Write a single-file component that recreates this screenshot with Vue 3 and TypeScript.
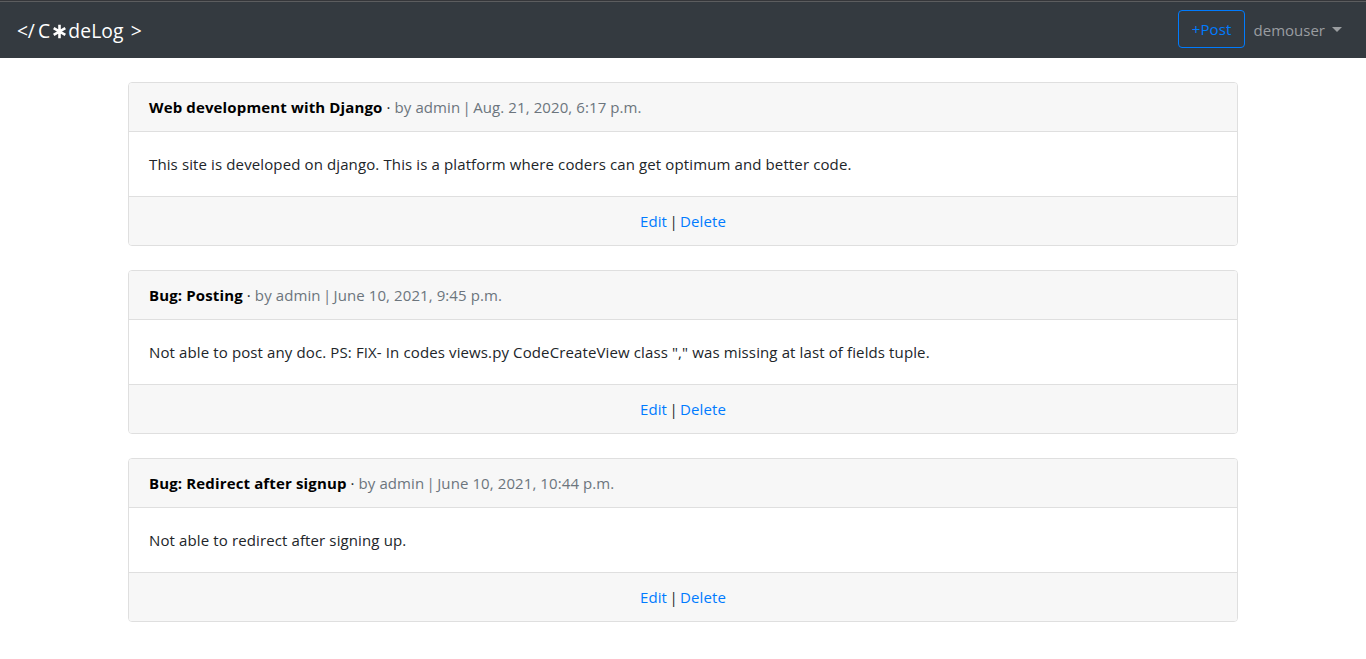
<script setup lang="ts">
interface Post {
  id: number
  title: string
  author: string
  date: string
  body: string
}

const posts: Post[] = [
  {
    id: 1,
    title: 'Web development with Django',
    author: 'admin',
    date: 'Aug. 21, 2020, 6:17 p.m.',
    body: 'This site is developed on django. This is a platform where coders can get optimum and better code.',
  },
  {
    id: 2,
    title: 'Bug: Posting',
    author: 'admin',
    date: 'June 10, 2021, 9:45 p.m.',
    body: 'Not able to post any doc. PS: FIX- In codes views.py CodeCreateView class "," was missing at last of fields tuple.',
  },
  {
    id: 3,
    title: 'Bug: Redirect after signup',
    author: 'admin',
    date: 'June 10, 2021, 10:44 p.m.',
    body: 'Not able to redirect after signing up.',
  },
]
</script>

<template>
  <div class="page">
    <nav class="navbar">
      <a class="brand"><span class="tag-open">&lt;/</span><span>C</span>
        <svg class="asterisk" viewBox="0 0 15 15" aria-hidden="true">
          <path d="M7.5 0.8V14.2M1.7 4.1L13.3 10.9M13.3 4.1L1.7 10.9" />
        </svg><span>deLog</span><span class="tag-close">&gt;</span></a>
      <div class="actions">
        <a class="post-button">+Post</a>
        <a class="user-menu"><span>demouser</span><span class="caret"></span></a>
      </div>
    </nav>
    <main class="container">
      <article v-for="post in posts" :key="post.id" class="card">
        <header class="card-header">
          <b class="title">{{ post.title }}</b><span class="dot">·</span><span class="meta">by {{ post.author }}<span class="bar">|</span>{{ post.date }}</span>
        </header>
        <p class="card-body">{{ post.body }}</p>
        <footer class="card-footer"><a>Edit</a><span class="bar">|</span><a>Delete</a></footer>
      </article>
    </main>
  </div>
</template>

<style>
body {
  margin: 0;
  background: #fff;
}
</style>

<style scoped>
.page {
  min-height: 659px;
  font-family: "Segoe UI", "Open Sans", "Noto Sans", sans-serif;
  font-size: 15px;
  line-height: 24px;
  letter-spacing: 0.12px;
  color: #212529;
}
.navbar {
  box-sizing: border-box;
  height: 58px;
  padding: 0 24px 0 17px;
  display: flex;
  justify-content: space-between;
  align-items: flex-start;
  background: linear-gradient(#35363a 0 1px, #5c5d5f 1px 2px, #343a40 2px);
}
.brand {
  display: flex;
  align-items: center;
  margin-top: 16px;
  height: 30px;
  color: #fff;
  font-size: 19.3px;
}
.tag-open {
  width: 21px;
  letter-spacing: -0.3px;
}
.asterisk {
  width: 15px;
  height: 15px;
  margin: 0 1px 0 2px;
  fill: none;
  stroke: #fff;
  stroke-width: 2.6;
}
.tag-close {
  margin-left: 7px;
}
.actions {
  display: flex;
  padding-top: 10px;
}
.post-button {
  box-sizing: border-box;
  width: 67px;
  height: 38px;
  padding-left: 1px;
  border: 1px solid #007bff;
  border-radius: 4px;
  color: #007bff;
  line-height: 37px;
  text-align: center;
}
.user-menu {
  display: flex;
  align-items: center;
  height: 40px;
  margin-left: 9px;
  letter-spacing: 0;
  color: #9a9da0;
}
.caret {
  margin-left: 7px;
  margin-top: -2px;
  border-top: 5px solid #9a9da0;
  border-left: 5px solid transparent;
  border-right: 5px solid transparent;
}
.container {
  width: 1110px;
  margin: 24px auto 0;
  display: flex;
  flex-direction: column;
  gap: 24px;
}
.card {
  border: 1px solid #dfdfdf;
  border-radius: 4px;
  overflow: hidden;
  white-space: nowrap;
}
.card-header,
.card-footer {
  display: flex;
  height: 24px;
  padding: 12px 20px;
  background: #f7f7f7;
}
.card-header {
  border-bottom: 1px solid #dfdfdf;
}
.card-footer {
  justify-content: center;
  border-top: 1px solid #dfdfdf;
}
.card-footer a {
  color: #007bff;
}
.bar {
  display: inline-block;
  width: 13px;
  text-align: center;
}
.title {
  color: #000;
  letter-spacing: 0.14px;
}
.dot {
  width: 12px;
  text-align: center;
}
.meta {
  color: #6c757d;
  letter-spacing: 0.09px;
}
.card-body {
  margin: 0;
  padding: 20px;
}
</style>
